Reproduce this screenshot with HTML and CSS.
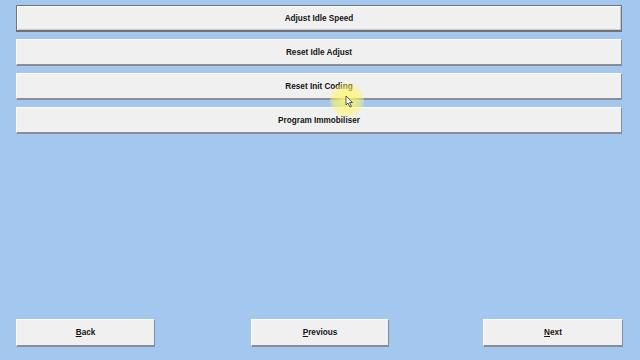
FILE: index.html
```html
<!DOCTYPE html>
<html>
<head>
<meta charset="utf-8">
<link rel="stylesheet" href="styles.css">
</head>
<body>
<div class="screen">
  <div class="list">
    <div class="btn focused">Adjust Idle Speed</div>
    <div class="btn">Reset Idle Adjust</div>
    <div class="btn">Reset Init Coding</div>
    <div class="btn">Program Immobiliser</div>
  </div>
  <div class="footer">
    <div class="btn nav back"><u>B</u>ack</div>
    <div class="btn nav prev"><u>P</u>revious</div>
    <div class="btn nav next"><u>N</u>ext</div>
  </div>
  <div class="glow"></div>
  <svg class="cursor" width="9" height="13" viewBox="0 0 9 13"><path d="M1 1 L1 10 L3 8 L5 12 L6.5 11.3 L4.6 7.5 L7.5 7.5 Z" fill="#fff" stroke="#333" stroke-width="0.8"/></svg>
</div>
</body>
</html>
```
FILE: styles.css
```css
html, body {
  margin: 0;
  padding: 0;
}
body {
  background: #a3c7ef;
  font-family: "Liberation Sans", Arial, sans-serif;
}
.screen {
  position: relative;
  width: 640px;
  height: 360px;
  display: flex;
  flex-direction: column;
  box-sizing: border-box;
  padding: 5px 18px 13px 16px;
  overflow: hidden;
}
.list {
  display: flex;
  flex-direction: column;
  gap: 7px;
}
.btn {
  height: 27px;
  box-sizing: border-box;
  background: #f1f0f0;
  border-top: 1px solid #fbfbfb;
  border-left: 1px solid #fbfbfb;
  border-right: 1px solid #8a8d92;
  border-bottom: 2px solid #8a8d92;
  display: flex;
  align-items: center;
  justify-content: center;
  font-size: 8.2px;
  font-weight: bold;
  color: #141414;
}
.btn.focused {
  border: 1px solid #6f7276;
  border-bottom: 2px solid #6f7276;
  box-shadow: inset 1px 1px 0 #fff, inset -1px -1px 0 #c9c9c9;
}
.footer {
  margin-top: auto;
  display: flex;
}
.nav {
  height: 28px;
  width: 139px;
  flex: none;
}
.nav.prev {
  width: 138px;
  margin-left: 96px;
}
.nav.next {
  width: 140px;
  margin-left: 94px;
}
.nav u {
  text-decoration-thickness: 1px;
}
.glow {
  position: absolute;
  left: 330px;
  top: 83px;
  width: 34px;
  height: 34px;
  border-radius: 50%;
  background: radial-gradient(circle, rgba(255,250,100,0.9) 0%, rgba(255,245,110,0.6) 50%, rgba(255,245,120,0) 100%);
}
.cursor {
  position: absolute;
  left: 345px;
  top: 95px;
}
```
